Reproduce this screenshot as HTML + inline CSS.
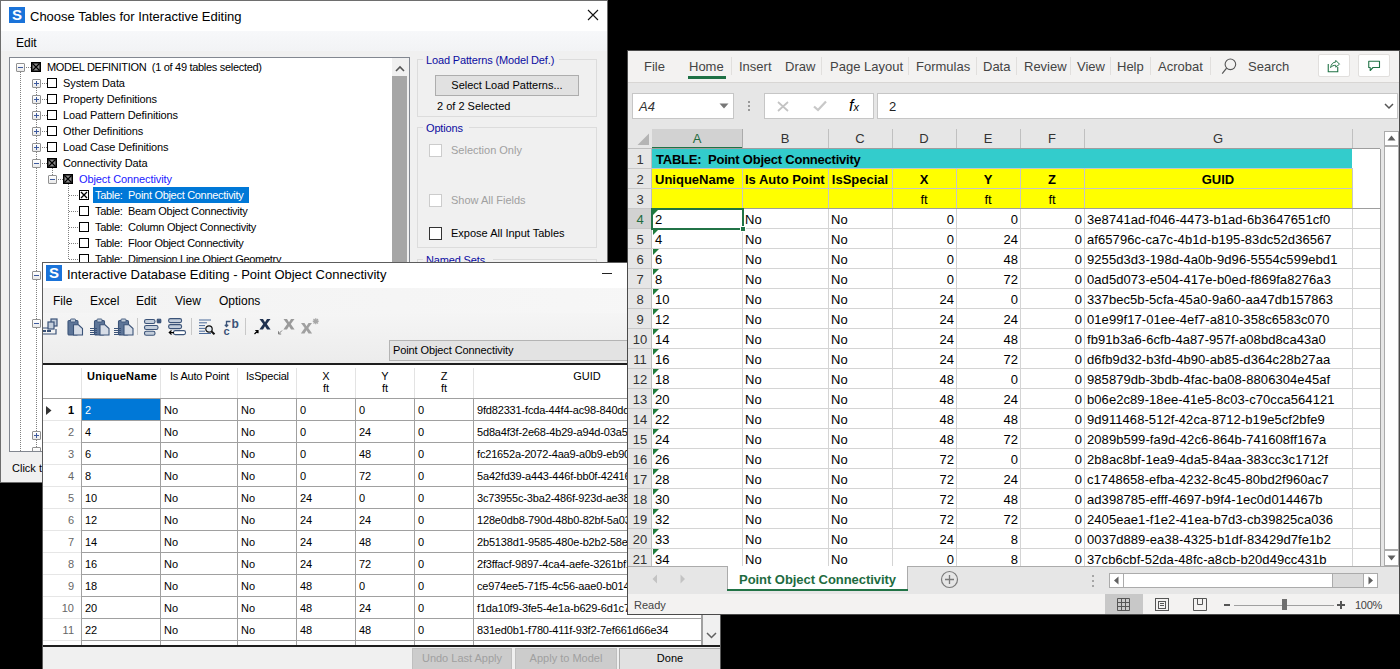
<!DOCTYPE html><html><head><meta charset="utf-8"><style>
*{margin:0;padding:0;box-sizing:border-box}
html,body{width:1400px;height:669px;overflow:hidden;background:#000;font-family:"Liberation Sans",sans-serif}
.ab{position:absolute}
.t{position:absolute;white-space:pre;line-height:1}
</style></head><body>
<div class="ab" style="left:0;top:0;width:1400px;height:669px;background:#000;overflow:hidden">

<div class="ab" id="d1" style="left:0;top:0;width:608px;height:483px;background:#f0f0f0;overflow:hidden">
<div class="ab" style="left:0;top:0;width:608px;height:31px;background:#fff"></div>
<div class="ab" style="left:9px;top:7px;width:16px;height:16px;background:#1a73d9"></div>
<div class="t" style="left:9px;top:7px;width:16px;font-size:15px;font-weight:700;color:#fff;text-align:center">S</div>
<div class="t" style="left:30px;top:10px;font-size:13px;color:#000">Choose Tables for Interactive Editing</div>
<svg class="ab" style="left:587px;top:9px" width="12" height="12"><path d="M1 1L11 11M11 1L1 11" stroke="#111" stroke-width="1.1"/></svg>
<div class="ab" style="left:0;top:31px;width:608px;height:20px;background:linear-gradient(#f7f8fa,#f2f3f5)"></div>
<div class="t" style="left:16px;top:37px;font-size:12px;color:#000">Edit</div>
<div class="ab" style="left:9px;top:57px;width:401px;height:395px;background:#fff;border:1px solid #828790"></div>
<div class="ab" style="left:392px;top:58px;width:17px;height:393px;background:#f0f0f0"></div>
<svg class="ab" style="left:395px;top:65px" width="10" height="7"><path d="M1 6L5 2L9 6" stroke="#555" stroke-width="1.6" fill="none"/></svg>
<div class="ab" style="left:392px;top:76px;width:15px;height:376px;background:#a6a6a6"></div>
<div class="ab" style="left:20px;top:72px;width:1px;height:380px;background:repeating-linear-gradient(#808080 0 1px,transparent 1px 2px)"></div>
<div class="ab" style="left:36px;top:88px;width:1px;height:364px;background:repeating-linear-gradient(#808080 0 1px,transparent 1px 2px)"></div>
<div class="ab" style="left:52px;top:168px;width:1px;height:12px;background:repeating-linear-gradient(#808080 0 1px,transparent 1px 2px)"></div>
<div class="ab" style="left:68px;top:184px;width:1px;height:76px;background:repeating-linear-gradient(#808080 0 1px,transparent 1px 2px)"></div>
<div class="ab" style="left:16px;top:63px;width:9px;height:9px;border:1px solid #919191;border-radius:1px;background:linear-gradient(#fff,#e9e9e9)"></div>
<div class="ab" style="left:18px;top:67px;width:5px;height:1px;background:#3d5a9e"></div>
<div class="ab" style="left:26px;top:67px;width:5px;height:1px;background:repeating-linear-gradient(90deg,#808080 0 1px,transparent 1px 2px)"></div>
<svg class="ab" style="left:31px;top:62px" width="10" height="10"><rect x="0" y="0" width="10" height="10" fill="#000"/><path d="M1.5 1.5H8.5L5 5ZM1.5 8.5H8.5L5 5ZM1.5 1.5V8.5L5 5ZM8.5 1.5V8.5L5 5Z" fill="#8c8c8c"/><path d="M1.5 1.5L8.5 8.5M8.5 1.5L1.5 8.5" stroke="#000" stroke-width="1.2"/></svg>
<div class="t" style="left:47px;top:62px;font-size:11px;letter-spacing:-0.1px;color:#000;letter-spacing:-0.3px">MODEL DEFINITION  (1 of 49 tables selected)</div>
<div class="ab" style="left:32px;top:79px;width:9px;height:9px;border:1px solid #919191;border-radius:1px;background:linear-gradient(#fff,#e9e9e9)"></div>
<div class="ab" style="left:34px;top:83px;width:5px;height:1px;background:#3d5a9e"></div>
<div class="ab" style="left:36px;top:81px;width:1px;height:5px;background:#3d5a9e"></div>
<div class="ab" style="left:42px;top:83px;width:5px;height:1px;background:repeating-linear-gradient(90deg,#808080 0 1px,transparent 1px 2px)"></div>
<div class="ab" style="left:47px;top:78px;width:10px;height:10px;border:1px solid #000;background:#fff"></div>
<div class="t" style="left:63px;top:78px;font-size:11px;letter-spacing:-0.1px;color:#000">System Data</div>
<div class="ab" style="left:32px;top:95px;width:9px;height:9px;border:1px solid #919191;border-radius:1px;background:linear-gradient(#fff,#e9e9e9)"></div>
<div class="ab" style="left:34px;top:99px;width:5px;height:1px;background:#3d5a9e"></div>
<div class="ab" style="left:36px;top:97px;width:1px;height:5px;background:#3d5a9e"></div>
<div class="ab" style="left:42px;top:99px;width:5px;height:1px;background:repeating-linear-gradient(90deg,#808080 0 1px,transparent 1px 2px)"></div>
<div class="ab" style="left:47px;top:94px;width:10px;height:10px;border:1px solid #000;background:#fff"></div>
<div class="t" style="left:63px;top:94px;font-size:11px;letter-spacing:-0.1px;color:#000">Property Definitions</div>
<div class="ab" style="left:32px;top:111px;width:9px;height:9px;border:1px solid #919191;border-radius:1px;background:linear-gradient(#fff,#e9e9e9)"></div>
<div class="ab" style="left:34px;top:115px;width:5px;height:1px;background:#3d5a9e"></div>
<div class="ab" style="left:36px;top:113px;width:1px;height:5px;background:#3d5a9e"></div>
<div class="ab" style="left:42px;top:115px;width:5px;height:1px;background:repeating-linear-gradient(90deg,#808080 0 1px,transparent 1px 2px)"></div>
<div class="ab" style="left:47px;top:110px;width:10px;height:10px;border:1px solid #000;background:#fff"></div>
<div class="t" style="left:63px;top:110px;font-size:11px;letter-spacing:-0.1px;color:#000">Load Pattern Definitions</div>
<div class="ab" style="left:32px;top:127px;width:9px;height:9px;border:1px solid #919191;border-radius:1px;background:linear-gradient(#fff,#e9e9e9)"></div>
<div class="ab" style="left:34px;top:131px;width:5px;height:1px;background:#3d5a9e"></div>
<div class="ab" style="left:36px;top:129px;width:1px;height:5px;background:#3d5a9e"></div>
<div class="ab" style="left:42px;top:131px;width:5px;height:1px;background:repeating-linear-gradient(90deg,#808080 0 1px,transparent 1px 2px)"></div>
<div class="ab" style="left:47px;top:126px;width:10px;height:10px;border:1px solid #000;background:#fff"></div>
<div class="t" style="left:63px;top:126px;font-size:11px;letter-spacing:-0.1px;color:#000">Other Definitions</div>
<div class="ab" style="left:32px;top:143px;width:9px;height:9px;border:1px solid #919191;border-radius:1px;background:linear-gradient(#fff,#e9e9e9)"></div>
<div class="ab" style="left:34px;top:147px;width:5px;height:1px;background:#3d5a9e"></div>
<div class="ab" style="left:36px;top:145px;width:1px;height:5px;background:#3d5a9e"></div>
<div class="ab" style="left:42px;top:147px;width:5px;height:1px;background:repeating-linear-gradient(90deg,#808080 0 1px,transparent 1px 2px)"></div>
<div class="ab" style="left:47px;top:142px;width:10px;height:10px;border:1px solid #000;background:#fff"></div>
<div class="t" style="left:63px;top:142px;font-size:11px;letter-spacing:-0.1px;color:#000">Load Case Definitions</div>
<div class="ab" style="left:32px;top:159px;width:9px;height:9px;border:1px solid #919191;border-radius:1px;background:linear-gradient(#fff,#e9e9e9)"></div>
<div class="ab" style="left:34px;top:163px;width:5px;height:1px;background:#3d5a9e"></div>
<div class="ab" style="left:42px;top:163px;width:5px;height:1px;background:repeating-linear-gradient(90deg,#808080 0 1px,transparent 1px 2px)"></div>
<svg class="ab" style="left:47px;top:158px" width="10" height="10"><rect x="0" y="0" width="10" height="10" fill="#000"/><path d="M1.5 1.5H8.5L5 5ZM1.5 8.5H8.5L5 5ZM1.5 1.5V8.5L5 5ZM8.5 1.5V8.5L5 5Z" fill="#8c8c8c"/><path d="M1.5 1.5L8.5 8.5M8.5 1.5L1.5 8.5" stroke="#000" stroke-width="1.2"/></svg>
<div class="t" style="left:63px;top:158px;font-size:11px;letter-spacing:-0.1px;color:#000">Connectivity Data</div>
<div class="ab" style="left:48px;top:175px;width:9px;height:9px;border:1px solid #919191;border-radius:1px;background:linear-gradient(#fff,#e9e9e9)"></div>
<div class="ab" style="left:50px;top:179px;width:5px;height:1px;background:#3d5a9e"></div>
<div class="ab" style="left:58px;top:179px;width:5px;height:1px;background:repeating-linear-gradient(90deg,#808080 0 1px,transparent 1px 2px)"></div>
<svg class="ab" style="left:63px;top:174px" width="10" height="10"><rect x="0" y="0" width="10" height="10" fill="#000"/><path d="M1.5 1.5H8.5L5 5ZM1.5 8.5H8.5L5 5ZM1.5 1.5V8.5L5 5ZM8.5 1.5V8.5L5 5Z" fill="#8c8c8c"/><path d="M1.5 1.5L8.5 8.5M8.5 1.5L1.5 8.5" stroke="#000" stroke-width="1.2"/></svg>
<div class="t" style="left:79px;top:174px;font-size:11px;letter-spacing:-0.1px;color:#2020ff">Object Connectivity</div>
<div class="ab" style="left:69px;top:195px;width:9px;height:1px;background:repeating-linear-gradient(90deg,#808080 0 1px,transparent 1px 2px)"></div>
<svg class="ab" style="left:79px;top:190px" width="10" height="10"><rect x="0.5" y="0.5" width="9" height="9" fill="#fff" stroke="#000"/><path d="M2 2L8 8M8 2L2 8" stroke="#000" stroke-width="1.3"/></svg>
<div class="ab" style="left:93px;top:187px;width:156px;height:16px;background:#0078d7"></div>
<div class="t" style="left:95px;top:190px;font-size:11px;letter-spacing:-0.3px;color:#fff">Table:  Point Object Connectivity</div>
<div class="ab" style="left:69px;top:211px;width:9px;height:1px;background:repeating-linear-gradient(90deg,#808080 0 1px,transparent 1px 2px)"></div>
<div class="ab" style="left:79px;top:206px;width:10px;height:10px;border:1px solid #000;background:#fff"></div>
<div class="t" style="left:95px;top:206px;font-size:11px;letter-spacing:-0.3px;color:#000">Table:  Beam Object Connectivity</div>
<div class="ab" style="left:69px;top:227px;width:9px;height:1px;background:repeating-linear-gradient(90deg,#808080 0 1px,transparent 1px 2px)"></div>
<div class="ab" style="left:79px;top:222px;width:10px;height:10px;border:1px solid #000;background:#fff"></div>
<div class="t" style="left:95px;top:222px;font-size:11px;letter-spacing:-0.3px;color:#000">Table:  Column Object Connectivity</div>
<div class="ab" style="left:69px;top:243px;width:9px;height:1px;background:repeating-linear-gradient(90deg,#808080 0 1px,transparent 1px 2px)"></div>
<div class="ab" style="left:79px;top:238px;width:10px;height:10px;border:1px solid #000;background:#fff"></div>
<div class="t" style="left:95px;top:238px;font-size:11px;letter-spacing:-0.3px;color:#000">Table:  Floor Object Connectivity</div>
<div class="ab" style="left:69px;top:259px;width:9px;height:1px;background:repeating-linear-gradient(90deg,#808080 0 1px,transparent 1px 2px)"></div>
<div class="ab" style="left:79px;top:254px;width:10px;height:10px;border:1px solid #000;background:#fff"></div>
<div class="t" style="left:95px;top:254px;font-size:11px;letter-spacing:-0.3px;color:#000">Table:  Dimension Line Object Geometry</div>
<div class="ab" style="left:32px;top:271px;width:9px;height:9px;border:1px solid #919191;border-radius:1px;background:linear-gradient(#fff,#e9e9e9)"></div>
<div class="ab" style="left:34px;top:275px;width:5px;height:1px;background:#3d5a9e"></div>
<div class="ab" style="left:42px;top:275px;width:5px;height:1px;background:repeating-linear-gradient(90deg,#808080 0 1px,transparent 1px 2px)"></div>
<div class="ab" style="left:32px;top:319px;width:9px;height:9px;border:1px solid #919191;border-radius:1px;background:linear-gradient(#fff,#e9e9e9)"></div>
<div class="ab" style="left:34px;top:323px;width:5px;height:1px;background:#3d5a9e"></div>
<div class="ab" style="left:42px;top:323px;width:5px;height:1px;background:repeating-linear-gradient(90deg,#808080 0 1px,transparent 1px 2px)"></div>
<div class="ab" style="left:32px;top:431px;width:9px;height:9px;border:1px solid #919191;border-radius:1px;background:linear-gradient(#fff,#e9e9e9)"></div>
<div class="ab" style="left:34px;top:435px;width:5px;height:1px;background:#3d5a9e"></div>
<div class="ab" style="left:36px;top:433px;width:1px;height:5px;background:#3d5a9e"></div>
<div class="ab" style="left:42px;top:435px;width:5px;height:1px;background:repeating-linear-gradient(90deg,#808080 0 1px,transparent 1px 2px)"></div>
<div class="ab" style="left:32px;top:447px;width:9px;height:9px;border:1px solid #919191;border-radius:1px;background:linear-gradient(#fff,#e9e9e9)"></div>
<div class="ab" style="left:34px;top:451px;width:5px;height:1px;background:#3d5a9e"></div>
<div class="ab" style="left:9px;top:451px;width:401px;height:1px;background:#828790"></div>
<div class="ab" style="left:9px;top:452px;width:401px;height:8px;background:#f0f0f0"></div>
<div class="ab" style="left:417px;top:59px;width:180px;height:58px;border:1px solid #dcdcdc"></div>
<div class="ab" style="left:423px;top:53px;width:136px;height:12px;background:#f0f0f0"></div>
<div class="t" style="left:426px;top:55px;font-size:11px;color:#0c0ca0;letter-spacing:-0.15px">Load Patterns (Model Def.)</div>
<div class="ab" style="left:417px;top:127px;width:180px;height:121px;border:1px solid #dcdcdc"></div>
<div class="ab" style="left:423px;top:121px;width:46px;height:12px;background:#f0f0f0"></div>
<div class="t" style="left:426px;top:123px;font-size:11px;color:#0c0ca0;letter-spacing:-0.15px">Options</div>
<div class="ab" style="left:417px;top:259px;width:180px;height:60px;border:1px solid #dcdcdc"></div>
<div class="ab" style="left:423px;top:253px;width:70px;height:12px;background:#f0f0f0"></div>
<div class="t" style="left:426px;top:255px;font-size:11px;color:#0c0ca0;letter-spacing:-0.15px">Named Sets</div>
<div class="ab" style="left:435px;top:75px;width:144px;height:21px;background:#e1e1e1;border:1px solid #adadad"></div>
<div class="t" style="left:435px;top:80px;width:144px;text-align:center;font-size:11px;color:#000">Select Load Patterns...</div>
<div class="t" style="left:437px;top:101px;font-size:11px;color:#000">2 of 2 Selected</div>
<div class="ab" style="left:429px;top:144px;width:13px;height:13px;border:1px solid #cccccc;background:#fff"></div>
<div class="t" style="left:451px;top:145px;font-size:11px;color:#a0a0a0">Selection Only</div>
<div class="ab" style="left:429px;top:194px;width:13px;height:13px;border:1px solid #cccccc;background:#fff"></div>
<div class="t" style="left:451px;top:195px;font-size:11px;color:#a0a0a0">Show All Fields</div>
<div class="ab" style="left:429px;top:227px;width:13px;height:13px;border:1px solid #333;background:#fff"></div>
<div class="t" style="left:451px;top:228px;font-size:11px;color:#000">Expose All Input Tables</div>
<div class="t" style="left:12px;top:463px;font-size:11px;color:#000">Click the</div>
<div class="ab" style="left:0;top:0;width:608px;height:483px;border:1px solid #6e6e6e"></div>
</div>
<div class="ab" id="ide" style="left:42px;top:262px;width:679px;height:420px;background:#f0f0f0;border:1px solid #5c5c5c;overflow:hidden">
<div class="ab" style="left:0;top:0;width:700px;height:25px;background:#fff"></div>
<div class="ab" style="left:3px;top:2px;width:16px;height:16px;background:#1a73d9"></div>
<div class="t" style="left:3px;top:2px;width:16px;font-size:15px;font-weight:700;color:#fff;text-align:center">S</div>
<div class="t" style="left:24px;top:5px;font-size:13px;color:#000">Interactive Database Editing - Point Object Connectivity</div>
<div class="ab" style="left:559px;top:10px;width:10px;height:1px;background:#222"></div>
<div class="ab" style="left:0;top:25px;width:700px;height:25px;background:linear-gradient(90deg,#f3f3f3,#f7f7f7)"></div>
<div class="t" style="left:10px;top:32px;font-size:12px;color:#000">File</div>
<div class="t" style="left:47px;top:32px;font-size:12px;color:#000">Excel</div>
<div class="t" style="left:93px;top:32px;font-size:12px;color:#000">Edit</div>
<div class="t" style="left:132px;top:32px;font-size:12px;color:#000">View</div>
<div class="t" style="left:176px;top:32px;font-size:12px;color:#000">Options</div>
<div class="ab" style="left:0;top:50px;width:700px;height:50px;background:linear-gradient(#f5f5f5,#ececec)"></div>
<svg class="ab" style="left:0px;top:55px" width="18" height="18" viewBox="0 0 18 18"><rect x="8" y="1" width="6" height="7" fill="#c4cedb" stroke="#3b5378" stroke-width="1.2"/><rect x="5" y="4" width="6" height="7" fill="#c4cedb" stroke="#3b5378" stroke-width="1.2"/><path d="M0 10H5M0 16H13V11" stroke="#3b5378" fill="none" stroke-width="1.2"/><rect x="0" y="12" width="3" height="2" fill="#3b5378"/><rect x="4" y="12" width="4" height="2" fill="#3b5378"/></svg>
<svg class="ab" style="left:24px;top:55px" width="20" height="18" viewBox="0 0 20 18"><rect x="1" y="2.5" width="10" height="14.5" rx="1.2" fill="#5d7598" stroke="#3b5378" stroke-width="1.1"/><rect x="3.5" y="1" width="5" height="3" rx="0.8" fill="#c4cedb" stroke="#3b5378" stroke-width="0.9"/><path d="M6.5 6.8H11.5L15.5 10.5V17H6.5Z" fill="#d7dde7" stroke="#3b5378" stroke-width="1.1"/></svg>
<svg class="ab" style="left:47px;top:55px" width="20" height="18" viewBox="0 0 20 18"><g transform="translate(3.5,0)"><rect x="1" y="2.5" width="10" height="14.5" rx="1.2" fill="#5d7598" stroke="#3b5378" stroke-width="1.1"/><rect x="3.5" y="1" width="5" height="3" rx="0.8" fill="#c4cedb" stroke="#3b5378" stroke-width="0.9"/><path d="M6.5 6.8H11.5L15.5 10.5V17H6.5Z" fill="#d7dde7" stroke="#3b5378" stroke-width="1.1"/></g><rect x="0" y="10" width="7" height="1" fill="#3b5378"/><rect x="0" y="12" width="7" height="1" fill="#3b5378"/><rect x="0" y="14" width="7" height="1" fill="#3b5378"/><rect x="0" y="16" width="7" height="1" fill="#3b5378"/></svg>
<svg class="ab" style="left:71px;top:55px" width="20" height="18" viewBox="0 0 20 18"><g transform="translate(3.5,0)"><rect x="1" y="2.5" width="10" height="14.5" rx="1.2" fill="#5d7598" stroke="#3b5378" stroke-width="1.1"/><rect x="3.5" y="1" width="5" height="3" rx="0.8" fill="#c4cedb" stroke="#3b5378" stroke-width="0.9"/><path d="M6.5 6.8H11.5L15.5 10.5V17H6.5Z" fill="#d7dde7" stroke="#3b5378" stroke-width="1.1"/></g><rect x="0" y="10" width="7" height="1" fill="#3b5378"/><rect x="0" y="12" width="7" height="1" fill="#3b5378"/><rect x="0" y="14" width="7" height="1" fill="#3b5378"/><rect x="0" y="16" width="7" height="1" fill="#3b5378"/></svg>
<div class="ab" style="left:94px;top:55px;width:1px;height:17px;background:#c8c8c8"></div>
<svg class="ab" style="left:100px;top:55px" width="19" height="18" viewBox="0 0 19 18"><rect x="1.5" y="1.5" width="10.5" height="4" rx="1.8" fill="#c4cedb" stroke="#3b5378" stroke-width="1.1"/><rect x="1.5" y="7.5" width="13.5" height="4" rx="1.8" fill="#c4cedb" stroke="#3b5378" stroke-width="1.1"/><rect x="1.5" y="13.2" width="10.5" height="4" rx="1.8" fill="#c4cedb" stroke="#3b5378" stroke-width="1.1"/><path d="M14 1L18 5M18 1L14 5M16 0.5V5.5M13.5 3H18.5" stroke="#3b5378" stroke-width="1.3"/></svg>
<svg class="ab" style="left:125px;top:55px" width="19" height="18" viewBox="0 0 19 18"><rect x="0.6" y="0.6" width="13" height="4" rx="1.8" fill="#c4cedb" stroke="#3b5378" stroke-width="1.1"/><rect x="0.6" y="6.6" width="13" height="4" rx="1.8" fill="#c4cedb" stroke="#3b5378" stroke-width="1.1"/><rect x="5.5" y="12.6" width="12" height="4" rx="1.8" fill="#fff" stroke="#3b5378" stroke-width="1.1"/><path d="M1 14.6H6M3.5 12.5L1.2 14.6L3.5 16.7" stroke="#000" fill="none" stroke-width="1.1"/></svg>
<div class="ab" style="left:148px;top:55px;width:1px;height:17px;background:#c8c8c8"></div>
<svg class="ab" style="left:156px;top:56px" width="17" height="16" viewBox="0 0 17 16"><path d="M0 1H12M0 3.8H8M0 6.6H6M0 9.4H6M0 12.2H6M0 14.5H12" stroke="#4a6a9a" stroke-width="1"/><circle cx="10" cy="10" r="3.2" fill="#e8eef5" stroke="#111" stroke-width="1.2"/><path d="M12.3 12.3L15.5 15.3" stroke="#111" stroke-width="2"/></svg>
<svg class="ab" style="left:180px;top:55px" width="17" height="17" viewBox="0 0 17 17"><text x="8.5" y="9.5" font-family="Liberation Sans" font-weight="700" font-size="12" fill="#3b5378">b</text><text x="0.5" y="17" font-family="Liberation Sans" font-weight="700" font-size="11" fill="#3b5378">c</text><path d="M7.5 3.5H3.5V8.5M1.8 6.8L3.5 8.5L5.2 6.8" stroke="#3b5378" fill="none" stroke-width="1.3"/></svg>
<div class="ab" style="left:202px;top:55px;width:1px;height:17px;background:#c8c8c8"></div>
<svg class="ab" style="left:210px;top:55px" width="18" height="17" viewBox="0 0 18 17"><path d="M6.5 1H10L12 4.3L14 1H17.5L13.8 6L17.6 11.5H14L12 8.2L10 11.5H6.4L10.2 6Z" fill="#1f3150"/><path d="M1.5 16L5 12.5M2.3 12.5H5V15.2" stroke="#000" fill="none" stroke-width="1.2"/></svg>
<svg class="ab" style="left:234px;top:55px" width="18" height="17" viewBox="0 0 18 17"><path d="M6.5 1H10L12 4.3L14 1H17.5L13.8 6L17.6 11.5H14L12 8.2L10 11.5H6.4L10.2 6Z" fill="#9a9a9a"/><path d="M5 12.5L1.5 16M1.5 13.3V16H4.2" stroke="#808080" fill="none" stroke-width="1"/></svg>
<svg class="ab" style="left:258px;top:55px" width="18" height="17" viewBox="0 0 18 17"><path d="M0 5H3.5L5.5 8.3L7.5 5H11L7.3 10L11.1 15.5H7.5L5.5 12.2L3.5 15.5H-0.1L3.7 10Z" fill="#a0a0a0"/><path d="M12.5 1L17 5.5M17 1L12.5 5.5M14.75 0.3V6.2M11.8 3.25H17.7" stroke="#a8a8a8" stroke-width="1.3"/></svg>
<div class="ab" style="left:346px;top:77px;width:320px;height:21px;background:#e3e3e3;border:1px solid #b4b4b4"></div>
<div class="t" style="left:350px;top:82px;font-size:11px;color:#000;letter-spacing:-0.1px">Point Object Connectivity</div>
<div class="ab" style="left:0;top:100px;width:700px;height:2px;background:#1e1e1e"></div>
<div class="ab" style="left:0;top:102px;width:700px;height:280px;background:#fff"></div>
<div class="ab" style="left:38px;top:105px;width:1px;height:30px;background:#e3e3e3"></div>
<div class="ab" style="left:117px;top:105px;width:1px;height:30px;background:#e3e3e3"></div>
<div class="ab" style="left:194px;top:105px;width:1px;height:30px;background:#e3e3e3"></div>
<div class="ab" style="left:253px;top:105px;width:1px;height:30px;background:#e3e3e3"></div>
<div class="ab" style="left:312px;top:105px;width:1px;height:30px;background:#e3e3e3"></div>
<div class="ab" style="left:371px;top:105px;width:1px;height:30px;background:#e3e3e3"></div>
<div class="ab" style="left:430px;top:105px;width:1px;height:30px;background:#e3e3e3"></div>
<div class="ab" style="left:38px;top:135px;width:1px;height:247px;background:#a0a0a0"></div>
<div class="ab" style="left:0px;top:135px;width:658px;height:1px;background:#a0a0a0"></div>
<div class="t" style="left:44px;top:108px;font-size:11px;color:#000;font-weight:700;letter-spacing:0.3px">UniqueName</div>
<div class="t" style="left:127px;top:108px;font-size:11px;color:#000;letter-spacing:-0.2px">Is Auto Point</div>
<div class="t" style="left:203px;top:108px;font-size:11px;color:#000;letter-spacing:-0.2px">IsSpecial</div>
<div class="t" style="left:263px;top:108px;width:40px;text-align:center;font-size:11px;color:#000">X</div>
<div class="t" style="left:263px;top:120px;width:40px;text-align:center;font-size:11px;color:#000">ft</div>
<div class="t" style="left:322px;top:108px;width:40px;text-align:center;font-size:11px;color:#000">Y</div>
<div class="t" style="left:322px;top:120px;width:40px;text-align:center;font-size:11px;color:#000">ft</div>
<div class="t" style="left:381px;top:108px;width:40px;text-align:center;font-size:11px;color:#000">Z</div>
<div class="t" style="left:381px;top:120px;width:40px;text-align:center;font-size:11px;color:#000">ft</div>
<div class="t" style="left:514px;top:108px;width:60px;text-align:center;font-size:11px;color:#000">GUID</div>
<div class="ab" style="left:0px;top:157px;width:38px;height:1px;background:#e6e6e6"></div>
<div class="ab" style="left:38px;top:157px;width:620px;height:1px;background:#a0a0a0"></div>
<div class="ab" style="left:117px;top:135px;width:1px;height:22px;background:#a0a0a0"></div>
<div class="ab" style="left:194px;top:135px;width:1px;height:22px;background:#a0a0a0"></div>
<div class="ab" style="left:253px;top:135px;width:1px;height:22px;background:#a0a0a0"></div>
<div class="ab" style="left:312px;top:135px;width:1px;height:22px;background:#a0a0a0"></div>
<div class="ab" style="left:371px;top:135px;width:1px;height:22px;background:#a0a0a0"></div>
<div class="ab" style="left:430px;top:135px;width:1px;height:22px;background:#a0a0a0"></div>
<div class="ab" style="left:39px;top:136px;width:78px;height:21px;background:#0078d7"></div>
<svg class="ab" style="left:3px;top:143px" width="6" height="9" viewBox="0 0 6 9"><path d="M0 0L5.5 4.5L0 9Z" fill="#333"/></svg>
<div class="t" style="left:0px;top:142px;width:31px;text-align:right;font-size:11px;font-weight:700;color:#000">1</div>
<div class="t" style="left:42px;top:142px;font-size:11px;color:#fff;">2</div>
<div class="t" style="left:121px;top:142px;font-size:11px;color:#000;">No</div>
<div class="t" style="left:198px;top:142px;font-size:11px;color:#000;">No</div>
<div class="t" style="left:257px;top:142px;font-size:11px;color:#000;">0</div>
<div class="t" style="left:316px;top:142px;font-size:11px;color:#000;">0</div>
<div class="t" style="left:375px;top:142px;font-size:11px;color:#000;">0</div>
<div class="t" style="left:434px;top:142px;font-size:11px;color:#000;letter-spacing:-0.17px">9fd82331-fcda-44f4-ac98-840dd12345</div>
<div class="ab" style="left:0px;top:179px;width:38px;height:1px;background:#e6e6e6"></div>
<div class="ab" style="left:38px;top:179px;width:620px;height:1px;background:#a0a0a0"></div>
<div class="ab" style="left:117px;top:157px;width:1px;height:22px;background:#a0a0a0"></div>
<div class="ab" style="left:194px;top:157px;width:1px;height:22px;background:#a0a0a0"></div>
<div class="ab" style="left:253px;top:157px;width:1px;height:22px;background:#a0a0a0"></div>
<div class="ab" style="left:312px;top:157px;width:1px;height:22px;background:#a0a0a0"></div>
<div class="ab" style="left:371px;top:157px;width:1px;height:22px;background:#a0a0a0"></div>
<div class="ab" style="left:430px;top:157px;width:1px;height:22px;background:#a0a0a0"></div>
<div class="t" style="left:0px;top:164px;width:31px;text-align:right;font-size:11px;color:#666">2</div>
<div class="t" style="left:42px;top:164px;font-size:11px;color:#000;">4</div>
<div class="t" style="left:121px;top:164px;font-size:11px;color:#000;">No</div>
<div class="t" style="left:198px;top:164px;font-size:11px;color:#000;">No</div>
<div class="t" style="left:257px;top:164px;font-size:11px;color:#000;">0</div>
<div class="t" style="left:316px;top:164px;font-size:11px;color:#000;">24</div>
<div class="t" style="left:375px;top:164px;font-size:11px;color:#000;">0</div>
<div class="t" style="left:434px;top:164px;font-size:11px;color:#000;letter-spacing:-0.17px">5d8a4f3f-2e68-4b29-a94d-03a5123456</div>
<div class="ab" style="left:0px;top:201px;width:38px;height:1px;background:#e6e6e6"></div>
<div class="ab" style="left:38px;top:201px;width:620px;height:1px;background:#a0a0a0"></div>
<div class="ab" style="left:117px;top:179px;width:1px;height:22px;background:#a0a0a0"></div>
<div class="ab" style="left:194px;top:179px;width:1px;height:22px;background:#a0a0a0"></div>
<div class="ab" style="left:253px;top:179px;width:1px;height:22px;background:#a0a0a0"></div>
<div class="ab" style="left:312px;top:179px;width:1px;height:22px;background:#a0a0a0"></div>
<div class="ab" style="left:371px;top:179px;width:1px;height:22px;background:#a0a0a0"></div>
<div class="ab" style="left:430px;top:179px;width:1px;height:22px;background:#a0a0a0"></div>
<div class="t" style="left:0px;top:186px;width:31px;text-align:right;font-size:11px;color:#666">3</div>
<div class="t" style="left:42px;top:186px;font-size:11px;color:#000;">6</div>
<div class="t" style="left:121px;top:186px;font-size:11px;color:#000;">No</div>
<div class="t" style="left:198px;top:186px;font-size:11px;color:#000;">No</div>
<div class="t" style="left:257px;top:186px;font-size:11px;color:#000;">0</div>
<div class="t" style="left:316px;top:186px;font-size:11px;color:#000;">48</div>
<div class="t" style="left:375px;top:186px;font-size:11px;color:#000;">0</div>
<div class="t" style="left:434px;top:186px;font-size:11px;color:#000;letter-spacing:-0.17px">fc21652a-2072-4aa9-a0b9-eb90123456</div>
<div class="ab" style="left:0px;top:223px;width:38px;height:1px;background:#e6e6e6"></div>
<div class="ab" style="left:38px;top:223px;width:620px;height:1px;background:#a0a0a0"></div>
<div class="ab" style="left:117px;top:201px;width:1px;height:22px;background:#a0a0a0"></div>
<div class="ab" style="left:194px;top:201px;width:1px;height:22px;background:#a0a0a0"></div>
<div class="ab" style="left:253px;top:201px;width:1px;height:22px;background:#a0a0a0"></div>
<div class="ab" style="left:312px;top:201px;width:1px;height:22px;background:#a0a0a0"></div>
<div class="ab" style="left:371px;top:201px;width:1px;height:22px;background:#a0a0a0"></div>
<div class="ab" style="left:430px;top:201px;width:1px;height:22px;background:#a0a0a0"></div>
<div class="t" style="left:0px;top:208px;width:31px;text-align:right;font-size:11px;color:#666">4</div>
<div class="t" style="left:42px;top:208px;font-size:11px;color:#000;">8</div>
<div class="t" style="left:121px;top:208px;font-size:11px;color:#000;">No</div>
<div class="t" style="left:198px;top:208px;font-size:11px;color:#000;">No</div>
<div class="t" style="left:257px;top:208px;font-size:11px;color:#000;">0</div>
<div class="t" style="left:316px;top:208px;font-size:11px;color:#000;">72</div>
<div class="t" style="left:375px;top:208px;font-size:11px;color:#000;">0</div>
<div class="t" style="left:434px;top:208px;font-size:11px;color:#000;letter-spacing:-0.17px">5a42fd39-a443-446f-bb0f-4241612345</div>
<div class="ab" style="left:0px;top:245px;width:38px;height:1px;background:#e6e6e6"></div>
<div class="ab" style="left:38px;top:245px;width:620px;height:1px;background:#a0a0a0"></div>
<div class="ab" style="left:117px;top:223px;width:1px;height:22px;background:#a0a0a0"></div>
<div class="ab" style="left:194px;top:223px;width:1px;height:22px;background:#a0a0a0"></div>
<div class="ab" style="left:253px;top:223px;width:1px;height:22px;background:#a0a0a0"></div>
<div class="ab" style="left:312px;top:223px;width:1px;height:22px;background:#a0a0a0"></div>
<div class="ab" style="left:371px;top:223px;width:1px;height:22px;background:#a0a0a0"></div>
<div class="ab" style="left:430px;top:223px;width:1px;height:22px;background:#a0a0a0"></div>
<div class="t" style="left:0px;top:230px;width:31px;text-align:right;font-size:11px;color:#666">5</div>
<div class="t" style="left:42px;top:230px;font-size:11px;color:#000;">10</div>
<div class="t" style="left:121px;top:230px;font-size:11px;color:#000;">No</div>
<div class="t" style="left:198px;top:230px;font-size:11px;color:#000;">No</div>
<div class="t" style="left:257px;top:230px;font-size:11px;color:#000;">24</div>
<div class="t" style="left:316px;top:230px;font-size:11px;color:#000;">0</div>
<div class="t" style="left:375px;top:230px;font-size:11px;color:#000;">0</div>
<div class="t" style="left:434px;top:230px;font-size:11px;color:#000;letter-spacing:-0.17px">3c73955c-3ba2-486f-923d-ae38123456</div>
<div class="ab" style="left:0px;top:267px;width:38px;height:1px;background:#e6e6e6"></div>
<div class="ab" style="left:38px;top:267px;width:620px;height:1px;background:#a0a0a0"></div>
<div class="ab" style="left:117px;top:245px;width:1px;height:22px;background:#a0a0a0"></div>
<div class="ab" style="left:194px;top:245px;width:1px;height:22px;background:#a0a0a0"></div>
<div class="ab" style="left:253px;top:245px;width:1px;height:22px;background:#a0a0a0"></div>
<div class="ab" style="left:312px;top:245px;width:1px;height:22px;background:#a0a0a0"></div>
<div class="ab" style="left:371px;top:245px;width:1px;height:22px;background:#a0a0a0"></div>
<div class="ab" style="left:430px;top:245px;width:1px;height:22px;background:#a0a0a0"></div>
<div class="t" style="left:0px;top:252px;width:31px;text-align:right;font-size:11px;color:#666">6</div>
<div class="t" style="left:42px;top:252px;font-size:11px;color:#000;">12</div>
<div class="t" style="left:121px;top:252px;font-size:11px;color:#000;">No</div>
<div class="t" style="left:198px;top:252px;font-size:11px;color:#000;">No</div>
<div class="t" style="left:257px;top:252px;font-size:11px;color:#000;">24</div>
<div class="t" style="left:316px;top:252px;font-size:11px;color:#000;">24</div>
<div class="t" style="left:375px;top:252px;font-size:11px;color:#000;">0</div>
<div class="t" style="left:434px;top:252px;font-size:11px;color:#000;letter-spacing:-0.17px">128e0db8-790d-48b0-82bf-5a03123456</div>
<div class="ab" style="left:0px;top:289px;width:38px;height:1px;background:#e6e6e6"></div>
<div class="ab" style="left:38px;top:289px;width:620px;height:1px;background:#a0a0a0"></div>
<div class="ab" style="left:117px;top:267px;width:1px;height:22px;background:#a0a0a0"></div>
<div class="ab" style="left:194px;top:267px;width:1px;height:22px;background:#a0a0a0"></div>
<div class="ab" style="left:253px;top:267px;width:1px;height:22px;background:#a0a0a0"></div>
<div class="ab" style="left:312px;top:267px;width:1px;height:22px;background:#a0a0a0"></div>
<div class="ab" style="left:371px;top:267px;width:1px;height:22px;background:#a0a0a0"></div>
<div class="ab" style="left:430px;top:267px;width:1px;height:22px;background:#a0a0a0"></div>
<div class="t" style="left:0px;top:274px;width:31px;text-align:right;font-size:11px;color:#666">7</div>
<div class="t" style="left:42px;top:274px;font-size:11px;color:#000;">14</div>
<div class="t" style="left:121px;top:274px;font-size:11px;color:#000;">No</div>
<div class="t" style="left:198px;top:274px;font-size:11px;color:#000;">No</div>
<div class="t" style="left:257px;top:274px;font-size:11px;color:#000;">24</div>
<div class="t" style="left:316px;top:274px;font-size:11px;color:#000;">48</div>
<div class="t" style="left:375px;top:274px;font-size:11px;color:#000;">0</div>
<div class="t" style="left:434px;top:274px;font-size:11px;color:#000;letter-spacing:-0.17px">2b5138d1-9585-480e-b2b2-58e1234567</div>
<div class="ab" style="left:0px;top:311px;width:38px;height:1px;background:#e6e6e6"></div>
<div class="ab" style="left:38px;top:311px;width:620px;height:1px;background:#a0a0a0"></div>
<div class="ab" style="left:117px;top:289px;width:1px;height:22px;background:#a0a0a0"></div>
<div class="ab" style="left:194px;top:289px;width:1px;height:22px;background:#a0a0a0"></div>
<div class="ab" style="left:253px;top:289px;width:1px;height:22px;background:#a0a0a0"></div>
<div class="ab" style="left:312px;top:289px;width:1px;height:22px;background:#a0a0a0"></div>
<div class="ab" style="left:371px;top:289px;width:1px;height:22px;background:#a0a0a0"></div>
<div class="ab" style="left:430px;top:289px;width:1px;height:22px;background:#a0a0a0"></div>
<div class="t" style="left:0px;top:296px;width:31px;text-align:right;font-size:11px;color:#666">8</div>
<div class="t" style="left:42px;top:296px;font-size:11px;color:#000;">16</div>
<div class="t" style="left:121px;top:296px;font-size:11px;color:#000;">No</div>
<div class="t" style="left:198px;top:296px;font-size:11px;color:#000;">No</div>
<div class="t" style="left:257px;top:296px;font-size:11px;color:#000;">24</div>
<div class="t" style="left:316px;top:296px;font-size:11px;color:#000;">72</div>
<div class="t" style="left:375px;top:296px;font-size:11px;color:#000;">0</div>
<div class="t" style="left:434px;top:296px;font-size:11px;color:#000;letter-spacing:-0.17px">2f3ffacf-9897-4ca4-aefe-3261bf12345</div>
<div class="ab" style="left:0px;top:333px;width:38px;height:1px;background:#e6e6e6"></div>
<div class="ab" style="left:38px;top:333px;width:620px;height:1px;background:#a0a0a0"></div>
<div class="ab" style="left:117px;top:311px;width:1px;height:22px;background:#a0a0a0"></div>
<div class="ab" style="left:194px;top:311px;width:1px;height:22px;background:#a0a0a0"></div>
<div class="ab" style="left:253px;top:311px;width:1px;height:22px;background:#a0a0a0"></div>
<div class="ab" style="left:312px;top:311px;width:1px;height:22px;background:#a0a0a0"></div>
<div class="ab" style="left:371px;top:311px;width:1px;height:22px;background:#a0a0a0"></div>
<div class="ab" style="left:430px;top:311px;width:1px;height:22px;background:#a0a0a0"></div>
<div class="t" style="left:0px;top:318px;width:31px;text-align:right;font-size:11px;color:#666">9</div>
<div class="t" style="left:42px;top:318px;font-size:11px;color:#000;">18</div>
<div class="t" style="left:121px;top:318px;font-size:11px;color:#000;">No</div>
<div class="t" style="left:198px;top:318px;font-size:11px;color:#000;">No</div>
<div class="t" style="left:257px;top:318px;font-size:11px;color:#000;">48</div>
<div class="t" style="left:316px;top:318px;font-size:11px;color:#000;">0</div>
<div class="t" style="left:375px;top:318px;font-size:11px;color:#000;">0</div>
<div class="t" style="left:434px;top:318px;font-size:11px;color:#000;letter-spacing:-0.17px">ce974ee5-71f5-4c56-aae0-b014123456</div>
<div class="ab" style="left:0px;top:355px;width:38px;height:1px;background:#e6e6e6"></div>
<div class="ab" style="left:38px;top:355px;width:620px;height:1px;background:#a0a0a0"></div>
<div class="ab" style="left:117px;top:333px;width:1px;height:22px;background:#a0a0a0"></div>
<div class="ab" style="left:194px;top:333px;width:1px;height:22px;background:#a0a0a0"></div>
<div class="ab" style="left:253px;top:333px;width:1px;height:22px;background:#a0a0a0"></div>
<div class="ab" style="left:312px;top:333px;width:1px;height:22px;background:#a0a0a0"></div>
<div class="ab" style="left:371px;top:333px;width:1px;height:22px;background:#a0a0a0"></div>
<div class="ab" style="left:430px;top:333px;width:1px;height:22px;background:#a0a0a0"></div>
<div class="t" style="left:0px;top:340px;width:31px;text-align:right;font-size:11px;color:#666">10</div>
<div class="t" style="left:42px;top:340px;font-size:11px;color:#000;">20</div>
<div class="t" style="left:121px;top:340px;font-size:11px;color:#000;">No</div>
<div class="t" style="left:198px;top:340px;font-size:11px;color:#000;">No</div>
<div class="t" style="left:257px;top:340px;font-size:11px;color:#000;">48</div>
<div class="t" style="left:316px;top:340px;font-size:11px;color:#000;">24</div>
<div class="t" style="left:375px;top:340px;font-size:11px;color:#000;">0</div>
<div class="t" style="left:434px;top:340px;font-size:11px;color:#000;letter-spacing:-0.17px">f1da10f9-3fe5-4e1a-b629-6d1c712345</div>
<div class="ab" style="left:0px;top:377px;width:38px;height:1px;background:#e6e6e6"></div>
<div class="ab" style="left:38px;top:377px;width:620px;height:1px;background:#a0a0a0"></div>
<div class="ab" style="left:117px;top:355px;width:1px;height:22px;background:#a0a0a0"></div>
<div class="ab" style="left:194px;top:355px;width:1px;height:22px;background:#a0a0a0"></div>
<div class="ab" style="left:253px;top:355px;width:1px;height:22px;background:#a0a0a0"></div>
<div class="ab" style="left:312px;top:355px;width:1px;height:22px;background:#a0a0a0"></div>
<div class="ab" style="left:371px;top:355px;width:1px;height:22px;background:#a0a0a0"></div>
<div class="ab" style="left:430px;top:355px;width:1px;height:22px;background:#a0a0a0"></div>
<div class="t" style="left:0px;top:362px;width:31px;text-align:right;font-size:11px;color:#666">11</div>
<div class="t" style="left:42px;top:362px;font-size:11px;color:#000;">22</div>
<div class="t" style="left:121px;top:362px;font-size:11px;color:#000;">No</div>
<div class="t" style="left:198px;top:362px;font-size:11px;color:#000;">No</div>
<div class="t" style="left:257px;top:362px;font-size:11px;color:#000;">48</div>
<div class="t" style="left:316px;top:362px;font-size:11px;color:#000;">48</div>
<div class="t" style="left:375px;top:362px;font-size:11px;color:#000;">0</div>
<div class="t" style="left:434px;top:362px;font-size:11px;color:#000;letter-spacing:-0.17px">831ed0b1-f780-411f-93f2-7ef661d66e34</div>
<div class="ab" style="left:0px;top:399px;width:38px;height:1px;background:#e6e6e6"></div>
<div class="ab" style="left:38px;top:399px;width:620px;height:1px;background:#a0a0a0"></div>
<div class="ab" style="left:117px;top:377px;width:1px;height:22px;background:#a0a0a0"></div>
<div class="ab" style="left:194px;top:377px;width:1px;height:22px;background:#a0a0a0"></div>
<div class="ab" style="left:253px;top:377px;width:1px;height:22px;background:#a0a0a0"></div>
<div class="ab" style="left:312px;top:377px;width:1px;height:22px;background:#a0a0a0"></div>
<div class="ab" style="left:371px;top:377px;width:1px;height:22px;background:#a0a0a0"></div>
<div class="ab" style="left:430px;top:377px;width:1px;height:22px;background:#a0a0a0"></div>
<div class="t" style="left:0px;top:384px;width:31px;text-align:right;font-size:11px;color:#666">12</div>
<div class="t" style="left:42px;top:384px;font-size:11px;color:#000;">24</div>
<div class="t" style="left:121px;top:384px;font-size:11px;color:#000;">No</div>
<div class="t" style="left:198px;top:384px;font-size:11px;color:#000;">No</div>
<div class="t" style="left:257px;top:384px;font-size:11px;color:#000;">48</div>
<div class="t" style="left:316px;top:384px;font-size:11px;color:#000;">72</div>
<div class="t" style="left:375px;top:384px;font-size:11px;color:#000;">0</div>
<div class="t" style="left:434px;top:384px;font-size:11px;color:#000;letter-spacing:-0.17px">0a0a0a0a-0a0a-0a0a-0a0a-0a0a0a0a0a0a</div>
<div class="ab" style="left:658px;top:102px;width:20px;height:280px;background:#f0f0f0;border-left:2px solid #a0a0a0"></div>
<svg class="ab" style="left:663px;top:369px" width="11" height="7" viewBox="0 0 11 7"><path d="M1 1L5.5 5.5L10 1" stroke="#606060" stroke-width="1.5" fill="none"/></svg>
<div class="ab" style="left:0;top:382px;width:700px;height:2px;background:#1e1e1e"></div>
<div class="ab" style="left:0;top:384px;width:700px;height:30px;background:#f0f0f0"></div>
<div class="ab" style="left:369px;top:385px;width:100px;height:24px;background:#cccccc;border:1px solid #bfbfbf"></div>
<div class="t" style="left:369px;top:390px;width:100px;text-align:center;font-size:11px;color:#a0a0a0">Undo Last Apply</div>
<div class="ab" style="left:472px;top:385px;width:102px;height:24px;background:#cccccc;border:1px solid #bfbfbf"></div>
<div class="t" style="left:472px;top:390px;width:102px;text-align:center;font-size:11px;color:#a0a0a0">Apply to Model</div>
<div class="ab" style="left:576px;top:385px;width:102px;height:24px;background:#e1e1e1;border:1px solid #adadad"></div>
<div class="t" style="left:576px;top:390px;width:102px;text-align:center;font-size:11px;color:#000">Done</div>
</div>
<div class="ab" id="xl" style="left:627px;top:50px;width:773px;height:565px;background:#e6e6e6;border:1px solid #4a4a4a;overflow:hidden">
<div class="ab" style="left:0px;top:0px;width:772px;height:31px;background:#f3f2f1"></div>
<div class="ab" style="left:0px;top:31px;width:772px;height:1px;background:#d8d6d4"></div>
<div class="t" style="left:16px;top:9px;font-size:13px;color:#444">File</div>
<div class="t" style="left:61px;top:9px;font-size:13px;color:#444">Home</div>
<div class="t" style="left:111px;top:9px;font-size:13px;color:#444">Insert</div>
<div class="t" style="left:157px;top:9px;font-size:13px;color:#444">Draw</div>
<div class="t" style="left:202px;top:9px;font-size:13px;color:#444">Page Layout</div>
<div class="t" style="left:288px;top:9px;font-size:13px;color:#444">Formulas</div>
<div class="t" style="left:355px;top:9px;font-size:13px;color:#444">Data</div>
<div class="t" style="left:396px;top:9px;font-size:13px;color:#444">Review</div>
<div class="t" style="left:449px;top:9px;font-size:13px;color:#444">View</div>
<div class="t" style="left:489px;top:9px;font-size:13px;color:#444">Help</div>
<div class="t" style="left:530px;top:9px;font-size:13px;color:#444">Acrobat</div>
<div class="ab" style="left:60px;top:25px;width:38px;height:3px;background:#1e7145"></div>
<div class="ab" style="left:103px;top:6px;width:1px;height:18px;background:#e1dfdd"></div>
<div class="ab" style="left:193px;top:6px;width:1px;height:18px;background:#e1dfdd"></div>
<div class="ab" style="left:280px;top:6px;width:1px;height:18px;background:#e1dfdd"></div>
<div class="ab" style="left:348px;top:6px;width:1px;height:18px;background:#e1dfdd"></div>
<div class="ab" style="left:388px;top:6px;width:1px;height:18px;background:#e1dfdd"></div>
<div class="ab" style="left:442px;top:6px;width:1px;height:18px;background:#e1dfdd"></div>
<div class="ab" style="left:482px;top:6px;width:1px;height:18px;background:#e1dfdd"></div>
<div class="ab" style="left:522px;top:6px;width:1px;height:18px;background:#e1dfdd"></div>
<div class="ab" style="left:582px;top:6px;width:1px;height:18px;background:#e1dfdd"></div>
<svg class="ab" style="left:593px;top:6px" width="18" height="18" viewBox="0 0 18 18"><circle cx="9.4" cy="7.3" r="5.3" fill="none" stroke="#555" stroke-width="1.1"/><path d="M5.6 11.2L1.2 16.7" stroke="#555" stroke-width="1.2"/></svg>
<div class="t" style="left:620px;top:9px;font-size:13px;color:#444">Search</div>
<div class="ab" style="left:690px;top:3px;width:32px;height:23px;background:#fff;border:1px solid #e1dfdd;border-radius:2px"></div>
<svg class="ab" style="left:698px;top:8px" width="16" height="14" viewBox="0 0 16 14"><path d="M2.25 5V12.75H11.75V8" fill="none" stroke="#217346" stroke-width="1.1"/><path d="M4.6 8.6C5 5.3 7 3.1 9.8 3V1.4L13.5 5.2L9.8 8.2V6.3C7.6 6.2 5.8 7 4.6 8.6Z" fill="none" stroke="#217346" stroke-width="1" stroke-linejoin="round"/></svg>
<div class="ab" style="left:730px;top:3px;width:32px;height:23px;background:#fff;border:1px solid #e1dfdd;border-radius:2px"></div>
<svg class="ab" style="left:739px;top:9px" width="14" height="12" viewBox="0 0 14 12"><path d="M1.75 1.25H12.5V7.5H6L3.2 10.5V7.5H1.75Z" fill="none" stroke="#217346" stroke-width="1.1" stroke-linejoin="round"/></svg>
<div class="ab" style="left:4px;top:42px;width:102px;height:26px;background:#fff;border:1px solid #c6c6c6"></div>
<div class="t" style="left:11px;top:49px;font-size:13px;color:#333"><i>A4</i></div>
<svg class="ab" style="left:91px;top:52px" width="10" height="6" viewBox="0 0 10 6"><path d="M0.5 0.5H9.5L5 5.5Z" fill="#777"/></svg>
<div class="ab" style="left:120px;top:50px;width:2px;height:2px;background:#999"></div>
<div class="ab" style="left:120px;top:54px;width:2px;height:2px;background:#999"></div>
<div class="ab" style="left:120px;top:58px;width:2px;height:2px;background:#999"></div>
<div class="ab" style="left:136px;top:42px;width:110px;height:26px;background:#fff;border:1px solid #c6c6c6"></div>
<svg class="ab" style="left:149px;top:50px" width="12" height="11" viewBox="0 0 12 11"><path d="M1 1L11 10M11 1L1 10" stroke="#c3c3c3" stroke-width="1.7"/></svg>
<svg class="ab" style="left:185px;top:49px" width="14" height="12" viewBox="0 0 14 12"><path d="M1 6.5L5 10L13 1.5" stroke="#c8c8c8" stroke-width="2.3" fill="none"/></svg>
<div class="t" style="left:221px;top:47px;font-family:"Liberation Serif",serif;font-size:15px;color:#5a5a5a;font-weight:700"><i>f</i><span style="font-size:11px"><i>x</i></span></div>
<div class="ab" style="left:249px;top:42px;width:521px;height:26px;background:#fff;border:1px solid #c6c6c6"></div>
<div class="t" style="left:261px;top:49px;font-size:13px;color:#222">2</div>
<svg class="ab" style="left:756px;top:52px" width="10" height="7" viewBox="0 0 10 7"><path d="M1 1L5 5L9 1" stroke="#555" stroke-width="1.5" fill="none"/></svg>
<div class="ab" style="left:0px;top:78px;width:752px;height:20px;background:#e6e6e6"></div>
<div class="ab" style="left:24px;top:78px;width:90px;height:19px;background:#d2d2d2"></div>
<div class="ab" style="left:24px;top:96px;width:90px;height:2px;background:#217346"></div>
<div class="t" style="left:24px;top:81px;width:90px;text-align:center;font-size:13px;color:#1e6b40">A</div>
<div class="t" style="left:114px;top:81px;width:86px;text-align:center;font-size:13px;color:#333">B</div>
<div class="t" style="left:200px;top:81px;width:64px;text-align:center;font-size:13px;color:#333">C</div>
<div class="t" style="left:264px;top:81px;width:64px;text-align:center;font-size:13px;color:#333">D</div>
<div class="t" style="left:328px;top:81px;width:64px;text-align:center;font-size:13px;color:#333">E</div>
<div class="t" style="left:392px;top:81px;width:64px;text-align:center;font-size:13px;color:#333">F</div>
<div class="t" style="left:456px;top:81px;width:268px;text-align:center;font-size:13px;color:#333">G</div>
<div class="ab" style="left:114px;top:78px;width:1px;height:19px;background:#ababab"></div>
<div class="ab" style="left:200px;top:78px;width:1px;height:19px;background:#c0c0c0"></div>
<div class="ab" style="left:264px;top:78px;width:1px;height:19px;background:#c0c0c0"></div>
<div class="ab" style="left:328px;top:78px;width:1px;height:19px;background:#c0c0c0"></div>
<div class="ab" style="left:392px;top:78px;width:1px;height:19px;background:#c0c0c0"></div>
<div class="ab" style="left:456px;top:78px;width:1px;height:19px;background:#c0c0c0"></div>
<div class="ab" style="left:724px;top:78px;width:1px;height:19px;background:#c0c0c0"></div>
<div class="ab" style="left:0px;top:97px;width:752px;height:1px;background:#bdbdbd"></div>
<svg class="ab" style="left:9px;top:82px" width="13" height="13" viewBox="0 0 13 13"><path d="M12 0.5V12H0.5Z" fill="#b4b4b4"/></svg>
<div class="ab" style="left:0px;top:98px;width:752px;height:417px;background:#fff"></div>
<div class="ab" style="left:0px;top:98px;width:24px;height:417px;background:#e6e6e6"></div>
<div class="ab" style="left:0px;top:158px;width:24px;height:20px;background:#d2d2d2"></div>
<div class="ab" style="left:23px;top:98px;width:1px;height:417px;background:#bdbdbd"></div>
<div class="t" style="left:0px;top:102px;width:24px;text-align:center;font-size:13px;color:#333">1</div>
<div class="ab" style="left:0px;top:117px;width:24px;height:1px;background:#c8c8c8"></div>
<div class="t" style="left:0px;top:122px;width:24px;text-align:center;font-size:13px;color:#333">2</div>
<div class="ab" style="left:0px;top:137px;width:24px;height:1px;background:#c8c8c8"></div>
<div class="t" style="left:0px;top:142px;width:24px;text-align:center;font-size:13px;color:#333">3</div>
<div class="ab" style="left:0px;top:157px;width:24px;height:1px;background:#c8c8c8"></div>
<div class="t" style="left:0px;top:162px;width:24px;text-align:center;font-size:13px;color:#1e6b40">4</div>
<div class="ab" style="left:0px;top:177px;width:24px;height:1px;background:#c8c8c8"></div>
<div class="t" style="left:0px;top:182px;width:24px;text-align:center;font-size:13px;color:#333">5</div>
<div class="ab" style="left:0px;top:197px;width:24px;height:1px;background:#c8c8c8"></div>
<div class="t" style="left:0px;top:202px;width:24px;text-align:center;font-size:13px;color:#333">6</div>
<div class="ab" style="left:0px;top:217px;width:24px;height:1px;background:#c8c8c8"></div>
<div class="t" style="left:0px;top:222px;width:24px;text-align:center;font-size:13px;color:#333">7</div>
<div class="ab" style="left:0px;top:237px;width:24px;height:1px;background:#c8c8c8"></div>
<div class="t" style="left:0px;top:242px;width:24px;text-align:center;font-size:13px;color:#333">8</div>
<div class="ab" style="left:0px;top:257px;width:24px;height:1px;background:#c8c8c8"></div>
<div class="t" style="left:0px;top:262px;width:24px;text-align:center;font-size:13px;color:#333">9</div>
<div class="ab" style="left:0px;top:277px;width:24px;height:1px;background:#c8c8c8"></div>
<div class="t" style="left:0px;top:282px;width:24px;text-align:center;font-size:13px;color:#333">10</div>
<div class="ab" style="left:0px;top:297px;width:24px;height:1px;background:#c8c8c8"></div>
<div class="t" style="left:0px;top:302px;width:24px;text-align:center;font-size:13px;color:#333">11</div>
<div class="ab" style="left:0px;top:317px;width:24px;height:1px;background:#c8c8c8"></div>
<div class="t" style="left:0px;top:322px;width:24px;text-align:center;font-size:13px;color:#333">12</div>
<div class="ab" style="left:0px;top:337px;width:24px;height:1px;background:#c8c8c8"></div>
<div class="t" style="left:0px;top:342px;width:24px;text-align:center;font-size:13px;color:#333">13</div>
<div class="ab" style="left:0px;top:357px;width:24px;height:1px;background:#c8c8c8"></div>
<div class="t" style="left:0px;top:362px;width:24px;text-align:center;font-size:13px;color:#333">14</div>
<div class="ab" style="left:0px;top:377px;width:24px;height:1px;background:#c8c8c8"></div>
<div class="t" style="left:0px;top:382px;width:24px;text-align:center;font-size:13px;color:#333">15</div>
<div class="ab" style="left:0px;top:397px;width:24px;height:1px;background:#c8c8c8"></div>
<div class="t" style="left:0px;top:402px;width:24px;text-align:center;font-size:13px;color:#333">16</div>
<div class="ab" style="left:0px;top:417px;width:24px;height:1px;background:#c8c8c8"></div>
<div class="t" style="left:0px;top:422px;width:24px;text-align:center;font-size:13px;color:#333">17</div>
<div class="ab" style="left:0px;top:437px;width:24px;height:1px;background:#c8c8c8"></div>
<div class="t" style="left:0px;top:442px;width:24px;text-align:center;font-size:13px;color:#333">18</div>
<div class="ab" style="left:0px;top:457px;width:24px;height:1px;background:#c8c8c8"></div>
<div class="t" style="left:0px;top:462px;width:24px;text-align:center;font-size:13px;color:#333">19</div>
<div class="ab" style="left:0px;top:477px;width:24px;height:1px;background:#c8c8c8"></div>
<div class="t" style="left:0px;top:482px;width:24px;text-align:center;font-size:13px;color:#333">20</div>
<div class="ab" style="left:0px;top:497px;width:24px;height:1px;background:#c8c8c8"></div>
<div class="t" style="left:0px;top:502px;width:24px;text-align:center;font-size:13px;color:#333">21</div>
<div class="ab" style="left:0px;top:517px;width:24px;height:1px;background:#c8c8c8"></div>
<div class="ab" style="left:24px;top:98px;width:700px;height:19px;background:#33cccc"></div>
<div class="ab" style="left:24px;top:117px;width:700px;height:40px;background:#ffff00"></div>
<div class="ab" style="left:24px;top:117px;width:728px;height:1px;#c0c0c0"></div>
<div class="ab" style="left:24px;top:137px;width:728px;height:1px;#c0c0c0"></div>
<div class="ab" style="left:24px;top:157px;width:728px;height:1px;#c0c0c0"></div>
<div class="ab" style="left:24px;top:177px;width:728px;height:1px;background:#d4d4d4"></div>
<div class="ab" style="left:24px;top:197px;width:728px;height:1px;background:#d4d4d4"></div>
<div class="ab" style="left:24px;top:217px;width:728px;height:1px;background:#d4d4d4"></div>
<div class="ab" style="left:24px;top:237px;width:728px;height:1px;background:#d4d4d4"></div>
<div class="ab" style="left:24px;top:257px;width:728px;height:1px;background:#d4d4d4"></div>
<div class="ab" style="left:24px;top:277px;width:728px;height:1px;background:#d4d4d4"></div>
<div class="ab" style="left:24px;top:297px;width:728px;height:1px;background:#d4d4d4"></div>
<div class="ab" style="left:24px;top:317px;width:728px;height:1px;background:#d4d4d4"></div>
<div class="ab" style="left:24px;top:337px;width:728px;height:1px;background:#d4d4d4"></div>
<div class="ab" style="left:24px;top:357px;width:728px;height:1px;background:#d4d4d4"></div>
<div class="ab" style="left:24px;top:377px;width:728px;height:1px;background:#d4d4d4"></div>
<div class="ab" style="left:24px;top:397px;width:728px;height:1px;background:#d4d4d4"></div>
<div class="ab" style="left:24px;top:417px;width:728px;height:1px;background:#d4d4d4"></div>
<div class="ab" style="left:24px;top:437px;width:728px;height:1px;background:#d4d4d4"></div>
<div class="ab" style="left:24px;top:457px;width:728px;height:1px;background:#d4d4d4"></div>
<div class="ab" style="left:24px;top:477px;width:728px;height:1px;background:#d4d4d4"></div>
<div class="ab" style="left:24px;top:497px;width:728px;height:1px;background:#d4d4d4"></div>
<div class="ab" style="left:24px;top:517px;width:728px;height:1px;background:#d4d4d4"></div>
<div class="ab" style="left:114px;top:117px;width:1px;height:41px;background:#c6c6c6"></div>
<div class="ab" style="left:114px;top:158px;width:1px;height:357px;background:#d4d4d4"></div>
<div class="ab" style="left:200px;top:117px;width:1px;height:41px;background:#c6c6c6"></div>
<div class="ab" style="left:200px;top:158px;width:1px;height:357px;background:#d4d4d4"></div>
<div class="ab" style="left:264px;top:117px;width:1px;height:41px;background:#c6c6c6"></div>
<div class="ab" style="left:264px;top:158px;width:1px;height:357px;background:#d4d4d4"></div>
<div class="ab" style="left:328px;top:117px;width:1px;height:41px;background:#c6c6c6"></div>
<div class="ab" style="left:328px;top:158px;width:1px;height:357px;background:#d4d4d4"></div>
<div class="ab" style="left:392px;top:117px;width:1px;height:41px;background:#c6c6c6"></div>
<div class="ab" style="left:392px;top:158px;width:1px;height:357px;background:#d4d4d4"></div>
<div class="ab" style="left:456px;top:117px;width:1px;height:41px;background:#c6c6c6"></div>
<div class="ab" style="left:456px;top:158px;width:1px;height:357px;background:#d4d4d4"></div>
<div class="ab" style="left:724px;top:117px;width:1px;height:41px;background:#c6c6c6"></div>
<div class="ab" style="left:724px;top:158px;width:1px;height:357px;background:#d4d4d4"></div>
<div class="ab" style="left:24px;top:117px;width:700px;height:1px;background:#c6c6c6"></div>
<div class="ab" style="left:24px;top:137px;width:700px;height:1px;background:#c6c6c6"></div>
<div class="ab" style="left:24px;top:157px;width:728px;height:1px;background:#9e9e9e"></div>
<div class="ab" style="left:752px;top:98px;width:1px;height:417px;background:#9e9e9e"></div>
<div class="ab" style="left:24px;top:97px;width:728px;height:1px;background:#9e9e9e"></div>
<div class="t" style="left:28px;top:102px;font-size:13px;font-weight:700;color:#000;letter-spacing:-0.23px">TABLE:  Point Object Connectivity</div>
<div class="t" style="left:27px;top:122px;width:87px;text-align:left;font-size:13px;font-weight:700;color:#000;letter-spacing:0px">UniqueName</div>
<div class="t" style="left:117px;top:122px;width:83px;text-align:left;font-size:13px;font-weight:700;color:#000;letter-spacing:0px">Is Auto Point</div>
<div class="t" style="left:200px;top:122px;width:64px;text-align:center;font-size:13px;font-weight:700;color:#000;letter-spacing:0px">IsSpecial</div>
<div class="t" style="left:264px;top:122px;width:64px;text-align:center;font-size:13px;font-weight:700;color:#000;letter-spacing:0px">X</div>
<div class="t" style="left:328px;top:122px;width:64px;text-align:center;font-size:13px;font-weight:700;color:#000;letter-spacing:0px">Y</div>
<div class="t" style="left:392px;top:122px;width:64px;text-align:center;font-size:13px;font-weight:700;color:#000;letter-spacing:0px">Z</div>
<div class="t" style="left:456px;top:122px;width:268px;text-align:center;font-size:13px;font-weight:700;color:#000;letter-spacing:0px">GUID</div>
<div class="t" style="left:264px;top:142px;width:64px;text-align:center;font-size:13px;color:#000">ft</div>
<div class="t" style="left:328px;top:142px;width:64px;text-align:center;font-size:13px;color:#000">ft</div>
<div class="t" style="left:392px;top:142px;width:64px;text-align:center;font-size:13px;color:#000">ft</div>
<svg class="ab" style="left:25px;top:158px" width="6" height="6" viewBox="0 0 6 6"><path d="M0 0H6L0 6Z" fill="#1e7b3a"/></svg>
<div class="t" style="left:27px;top:162px;font-size:13px;color:#000">2</div>
<div class="t" style="left:117px;top:162px;font-size:13px;color:#000">No</div>
<div class="t" style="left:203px;top:162px;font-size:13px;color:#000">No</div>
<div class="t" style="left:264px;top:162px;width:62px;text-align:right;font-size:13px;color:#000">0</div>
<div class="t" style="left:328px;top:162px;width:62px;text-align:right;font-size:13px;color:#000">0</div>
<div class="t" style="left:392px;top:162px;width:62px;text-align:right;font-size:13px;color:#000">0</div>
<div class="t" style="left:459px;top:162px;font-size:13px;color:#000;letter-spacing:0.07px">3e8741ad-f046-4473-b1ad-6b3647651cf0</div>
<svg class="ab" style="left:25px;top:178px" width="6" height="6" viewBox="0 0 6 6"><path d="M0 0H6L0 6Z" fill="#1e7b3a"/></svg>
<div class="t" style="left:27px;top:182px;font-size:13px;color:#000">4</div>
<div class="t" style="left:117px;top:182px;font-size:13px;color:#000">No</div>
<div class="t" style="left:203px;top:182px;font-size:13px;color:#000">No</div>
<div class="t" style="left:264px;top:182px;width:62px;text-align:right;font-size:13px;color:#000">0</div>
<div class="t" style="left:328px;top:182px;width:62px;text-align:right;font-size:13px;color:#000">24</div>
<div class="t" style="left:392px;top:182px;width:62px;text-align:right;font-size:13px;color:#000">0</div>
<div class="t" style="left:459px;top:182px;font-size:13px;color:#000;letter-spacing:0.07px">af65796c-ca7c-4b1d-b195-83dc52d36567</div>
<svg class="ab" style="left:25px;top:198px" width="6" height="6" viewBox="0 0 6 6"><path d="M0 0H6L0 6Z" fill="#1e7b3a"/></svg>
<div class="t" style="left:27px;top:202px;font-size:13px;color:#000">6</div>
<div class="t" style="left:117px;top:202px;font-size:13px;color:#000">No</div>
<div class="t" style="left:203px;top:202px;font-size:13px;color:#000">No</div>
<div class="t" style="left:264px;top:202px;width:62px;text-align:right;font-size:13px;color:#000">0</div>
<div class="t" style="left:328px;top:202px;width:62px;text-align:right;font-size:13px;color:#000">48</div>
<div class="t" style="left:392px;top:202px;width:62px;text-align:right;font-size:13px;color:#000">0</div>
<div class="t" style="left:459px;top:202px;font-size:13px;color:#000;letter-spacing:0.07px">9255d3d3-198d-4a0b-9d96-5554c599ebd1</div>
<svg class="ab" style="left:25px;top:218px" width="6" height="6" viewBox="0 0 6 6"><path d="M0 0H6L0 6Z" fill="#1e7b3a"/></svg>
<div class="t" style="left:27px;top:222px;font-size:13px;color:#000">8</div>
<div class="t" style="left:117px;top:222px;font-size:13px;color:#000">No</div>
<div class="t" style="left:203px;top:222px;font-size:13px;color:#000">No</div>
<div class="t" style="left:264px;top:222px;width:62px;text-align:right;font-size:13px;color:#000">0</div>
<div class="t" style="left:328px;top:222px;width:62px;text-align:right;font-size:13px;color:#000">72</div>
<div class="t" style="left:392px;top:222px;width:62px;text-align:right;font-size:13px;color:#000">0</div>
<div class="t" style="left:459px;top:222px;font-size:13px;color:#000;letter-spacing:0.07px">0ad5d073-e504-417e-b0ed-f869fa8276a3</div>
<svg class="ab" style="left:25px;top:238px" width="6" height="6" viewBox="0 0 6 6"><path d="M0 0H6L0 6Z" fill="#1e7b3a"/></svg>
<div class="t" style="left:27px;top:242px;font-size:13px;color:#000">10</div>
<div class="t" style="left:117px;top:242px;font-size:13px;color:#000">No</div>
<div class="t" style="left:203px;top:242px;font-size:13px;color:#000">No</div>
<div class="t" style="left:264px;top:242px;width:62px;text-align:right;font-size:13px;color:#000">24</div>
<div class="t" style="left:328px;top:242px;width:62px;text-align:right;font-size:13px;color:#000">0</div>
<div class="t" style="left:392px;top:242px;width:62px;text-align:right;font-size:13px;color:#000">0</div>
<div class="t" style="left:459px;top:242px;font-size:13px;color:#000;letter-spacing:0.07px">337bec5b-5cfa-45a0-9a60-aa47db157863</div>
<svg class="ab" style="left:25px;top:258px" width="6" height="6" viewBox="0 0 6 6"><path d="M0 0H6L0 6Z" fill="#1e7b3a"/></svg>
<div class="t" style="left:27px;top:262px;font-size:13px;color:#000">12</div>
<div class="t" style="left:117px;top:262px;font-size:13px;color:#000">No</div>
<div class="t" style="left:203px;top:262px;font-size:13px;color:#000">No</div>
<div class="t" style="left:264px;top:262px;width:62px;text-align:right;font-size:13px;color:#000">24</div>
<div class="t" style="left:328px;top:262px;width:62px;text-align:right;font-size:13px;color:#000">24</div>
<div class="t" style="left:392px;top:262px;width:62px;text-align:right;font-size:13px;color:#000">0</div>
<div class="t" style="left:459px;top:262px;font-size:13px;color:#000;letter-spacing:0.07px">01e99f17-01ee-4ef7-a810-358c6583c070</div>
<svg class="ab" style="left:25px;top:278px" width="6" height="6" viewBox="0 0 6 6"><path d="M0 0H6L0 6Z" fill="#1e7b3a"/></svg>
<div class="t" style="left:27px;top:282px;font-size:13px;color:#000">14</div>
<div class="t" style="left:117px;top:282px;font-size:13px;color:#000">No</div>
<div class="t" style="left:203px;top:282px;font-size:13px;color:#000">No</div>
<div class="t" style="left:264px;top:282px;width:62px;text-align:right;font-size:13px;color:#000">24</div>
<div class="t" style="left:328px;top:282px;width:62px;text-align:right;font-size:13px;color:#000">48</div>
<div class="t" style="left:392px;top:282px;width:62px;text-align:right;font-size:13px;color:#000">0</div>
<div class="t" style="left:459px;top:282px;font-size:13px;color:#000;letter-spacing:0.07px">fb91b3a6-6cfb-4a87-957f-a08bd8ca43a0</div>
<svg class="ab" style="left:25px;top:298px" width="6" height="6" viewBox="0 0 6 6"><path d="M0 0H6L0 6Z" fill="#1e7b3a"/></svg>
<div class="t" style="left:27px;top:302px;font-size:13px;color:#000">16</div>
<div class="t" style="left:117px;top:302px;font-size:13px;color:#000">No</div>
<div class="t" style="left:203px;top:302px;font-size:13px;color:#000">No</div>
<div class="t" style="left:264px;top:302px;width:62px;text-align:right;font-size:13px;color:#000">24</div>
<div class="t" style="left:328px;top:302px;width:62px;text-align:right;font-size:13px;color:#000">72</div>
<div class="t" style="left:392px;top:302px;width:62px;text-align:right;font-size:13px;color:#000">0</div>
<div class="t" style="left:459px;top:302px;font-size:13px;color:#000;letter-spacing:0.07px">d6fb9d32-b3fd-4b90-ab85-d364c28b27aa</div>
<svg class="ab" style="left:25px;top:318px" width="6" height="6" viewBox="0 0 6 6"><path d="M0 0H6L0 6Z" fill="#1e7b3a"/></svg>
<div class="t" style="left:27px;top:322px;font-size:13px;color:#000">18</div>
<div class="t" style="left:117px;top:322px;font-size:13px;color:#000">No</div>
<div class="t" style="left:203px;top:322px;font-size:13px;color:#000">No</div>
<div class="t" style="left:264px;top:322px;width:62px;text-align:right;font-size:13px;color:#000">48</div>
<div class="t" style="left:328px;top:322px;width:62px;text-align:right;font-size:13px;color:#000">0</div>
<div class="t" style="left:392px;top:322px;width:62px;text-align:right;font-size:13px;color:#000">0</div>
<div class="t" style="left:459px;top:322px;font-size:13px;color:#000;letter-spacing:0.07px">985879db-3bdb-4fac-ba08-8806304e45af</div>
<svg class="ab" style="left:25px;top:338px" width="6" height="6" viewBox="0 0 6 6"><path d="M0 0H6L0 6Z" fill="#1e7b3a"/></svg>
<div class="t" style="left:27px;top:342px;font-size:13px;color:#000">20</div>
<div class="t" style="left:117px;top:342px;font-size:13px;color:#000">No</div>
<div class="t" style="left:203px;top:342px;font-size:13px;color:#000">No</div>
<div class="t" style="left:264px;top:342px;width:62px;text-align:right;font-size:13px;color:#000">48</div>
<div class="t" style="left:328px;top:342px;width:62px;text-align:right;font-size:13px;color:#000">24</div>
<div class="t" style="left:392px;top:342px;width:62px;text-align:right;font-size:13px;color:#000">0</div>
<div class="t" style="left:459px;top:342px;font-size:13px;color:#000;letter-spacing:0.07px">b06e2c89-18ee-41e5-8c03-c70cca564121</div>
<svg class="ab" style="left:25px;top:358px" width="6" height="6" viewBox="0 0 6 6"><path d="M0 0H6L0 6Z" fill="#1e7b3a"/></svg>
<div class="t" style="left:27px;top:362px;font-size:13px;color:#000">22</div>
<div class="t" style="left:117px;top:362px;font-size:13px;color:#000">No</div>
<div class="t" style="left:203px;top:362px;font-size:13px;color:#000">No</div>
<div class="t" style="left:264px;top:362px;width:62px;text-align:right;font-size:13px;color:#000">48</div>
<div class="t" style="left:328px;top:362px;width:62px;text-align:right;font-size:13px;color:#000">48</div>
<div class="t" style="left:392px;top:362px;width:62px;text-align:right;font-size:13px;color:#000">0</div>
<div class="t" style="left:459px;top:362px;font-size:13px;color:#000;letter-spacing:0.07px">9d911468-512f-42ca-8712-b19e5cf2bfe9</div>
<svg class="ab" style="left:25px;top:378px" width="6" height="6" viewBox="0 0 6 6"><path d="M0 0H6L0 6Z" fill="#1e7b3a"/></svg>
<div class="t" style="left:27px;top:382px;font-size:13px;color:#000">24</div>
<div class="t" style="left:117px;top:382px;font-size:13px;color:#000">No</div>
<div class="t" style="left:203px;top:382px;font-size:13px;color:#000">No</div>
<div class="t" style="left:264px;top:382px;width:62px;text-align:right;font-size:13px;color:#000">48</div>
<div class="t" style="left:328px;top:382px;width:62px;text-align:right;font-size:13px;color:#000">72</div>
<div class="t" style="left:392px;top:382px;width:62px;text-align:right;font-size:13px;color:#000">0</div>
<div class="t" style="left:459px;top:382px;font-size:13px;color:#000;letter-spacing:0.07px">2089b599-fa9d-42c6-864b-741608ff167a</div>
<svg class="ab" style="left:25px;top:398px" width="6" height="6" viewBox="0 0 6 6"><path d="M0 0H6L0 6Z" fill="#1e7b3a"/></svg>
<div class="t" style="left:27px;top:402px;font-size:13px;color:#000">26</div>
<div class="t" style="left:117px;top:402px;font-size:13px;color:#000">No</div>
<div class="t" style="left:203px;top:402px;font-size:13px;color:#000">No</div>
<div class="t" style="left:264px;top:402px;width:62px;text-align:right;font-size:13px;color:#000">72</div>
<div class="t" style="left:328px;top:402px;width:62px;text-align:right;font-size:13px;color:#000">0</div>
<div class="t" style="left:392px;top:402px;width:62px;text-align:right;font-size:13px;color:#000">0</div>
<div class="t" style="left:459px;top:402px;font-size:13px;color:#000;letter-spacing:0.07px">2b8ac8bf-1ea9-4da5-84aa-383cc3c1712f</div>
<svg class="ab" style="left:25px;top:418px" width="6" height="6" viewBox="0 0 6 6"><path d="M0 0H6L0 6Z" fill="#1e7b3a"/></svg>
<div class="t" style="left:27px;top:422px;font-size:13px;color:#000">28</div>
<div class="t" style="left:117px;top:422px;font-size:13px;color:#000">No</div>
<div class="t" style="left:203px;top:422px;font-size:13px;color:#000">No</div>
<div class="t" style="left:264px;top:422px;width:62px;text-align:right;font-size:13px;color:#000">72</div>
<div class="t" style="left:328px;top:422px;width:62px;text-align:right;font-size:13px;color:#000">24</div>
<div class="t" style="left:392px;top:422px;width:62px;text-align:right;font-size:13px;color:#000">0</div>
<div class="t" style="left:459px;top:422px;font-size:13px;color:#000;letter-spacing:0.07px">c1748658-efba-4232-8c45-80bd2f960ac7</div>
<svg class="ab" style="left:25px;top:438px" width="6" height="6" viewBox="0 0 6 6"><path d="M0 0H6L0 6Z" fill="#1e7b3a"/></svg>
<div class="t" style="left:27px;top:442px;font-size:13px;color:#000">30</div>
<div class="t" style="left:117px;top:442px;font-size:13px;color:#000">No</div>
<div class="t" style="left:203px;top:442px;font-size:13px;color:#000">No</div>
<div class="t" style="left:264px;top:442px;width:62px;text-align:right;font-size:13px;color:#000">72</div>
<div class="t" style="left:328px;top:442px;width:62px;text-align:right;font-size:13px;color:#000">48</div>
<div class="t" style="left:392px;top:442px;width:62px;text-align:right;font-size:13px;color:#000">0</div>
<div class="t" style="left:459px;top:442px;font-size:13px;color:#000;letter-spacing:0.07px">ad398785-efff-4697-b9f4-1ec0d014467b</div>
<svg class="ab" style="left:25px;top:458px" width="6" height="6" viewBox="0 0 6 6"><path d="M0 0H6L0 6Z" fill="#1e7b3a"/></svg>
<div class="t" style="left:27px;top:462px;font-size:13px;color:#000">32</div>
<div class="t" style="left:117px;top:462px;font-size:13px;color:#000">No</div>
<div class="t" style="left:203px;top:462px;font-size:13px;color:#000">No</div>
<div class="t" style="left:264px;top:462px;width:62px;text-align:right;font-size:13px;color:#000">72</div>
<div class="t" style="left:328px;top:462px;width:62px;text-align:right;font-size:13px;color:#000">72</div>
<div class="t" style="left:392px;top:462px;width:62px;text-align:right;font-size:13px;color:#000">0</div>
<div class="t" style="left:459px;top:462px;font-size:13px;color:#000;letter-spacing:0.07px">2405eae1-f1e2-41ea-b7d3-cb39825ca036</div>
<svg class="ab" style="left:25px;top:478px" width="6" height="6" viewBox="0 0 6 6"><path d="M0 0H6L0 6Z" fill="#1e7b3a"/></svg>
<div class="t" style="left:27px;top:482px;font-size:13px;color:#000">33</div>
<div class="t" style="left:117px;top:482px;font-size:13px;color:#000">No</div>
<div class="t" style="left:203px;top:482px;font-size:13px;color:#000">No</div>
<div class="t" style="left:264px;top:482px;width:62px;text-align:right;font-size:13px;color:#000">24</div>
<div class="t" style="left:328px;top:482px;width:62px;text-align:right;font-size:13px;color:#000">8</div>
<div class="t" style="left:392px;top:482px;width:62px;text-align:right;font-size:13px;color:#000">0</div>
<div class="t" style="left:459px;top:482px;font-size:13px;color:#000;letter-spacing:0.07px">0037d889-ea38-4325-b1df-83429d7fe1b2</div>
<svg class="ab" style="left:25px;top:498px" width="6" height="6" viewBox="0 0 6 6"><path d="M0 0H6L0 6Z" fill="#1e7b3a"/></svg>
<div class="t" style="left:27px;top:502px;font-size:13px;color:#000">34</div>
<div class="t" style="left:117px;top:502px;font-size:13px;color:#000">No</div>
<div class="t" style="left:203px;top:502px;font-size:13px;color:#000">No</div>
<div class="t" style="left:264px;top:502px;width:62px;text-align:right;font-size:13px;color:#000">0</div>
<div class="t" style="left:328px;top:502px;width:62px;text-align:right;font-size:13px;color:#000">8</div>
<div class="t" style="left:392px;top:502px;width:62px;text-align:right;font-size:13px;color:#000">0</div>
<div class="t" style="left:459px;top:502px;font-size:13px;color:#000;letter-spacing:0.07px">37cb6cbf-52da-48fc-a8cb-b20d49cc431b</div>
<div class="ab" style="left:23px;top:157px;width:93px;height:22px;border:2px solid #217346;background:transparent"></div>
<div class="ab" style="left:112px;top:175px;width:6px;height:6px;background:#217346;border:1px solid #fff"></div>
<div class="ab" style="left:753px;top:78px;width:19px;height:437px;background:#e6e6e6"></div>
<div class="ab" style="left:756px;top:80px;width:15px;height:15px;background:#fff;border:1px solid #ababab"></div>
<svg class="ab" style="left:759px;top:84px" width="9" height="6" viewBox="0 0 9 6"><path d="M0.5 5.5L4.5 0.5L8.5 5.5Z" fill="#606060"/></svg>
<div class="ab" style="left:756px;top:95px;width:15px;height:404px;background:#fff;border:1px solid #ababab"></div>
<div class="ab" style="left:756px;top:499px;width:15px;height:16px;background:#fff;border:1px solid #ababab"></div>
<svg class="ab" style="left:759px;top:504px" width="9" height="6" viewBox="0 0 9 6"><path d="M0.5 0.5L4.5 5.5L8.5 0.5Z" fill="#606060"/></svg>
<div class="ab" style="left:0px;top:515px;width:772px;height:28px;background:#e6e6e6"></div>
<div class="ab" style="left:0px;top:515px;width:772px;height:1px;background:#ababab"></div>
<svg class="ab" style="left:23px;top:522px" width="8" height="12" viewBox="0 0 8 12"><path d="M6 1.5L1.5 6L6 10.5Z" fill="#c3c3c3"/></svg>
<svg class="ab" style="left:51px;top:522px" width="8" height="12" viewBox="0 0 8 12"><path d="M1.5 1.5L6 6L1.5 10.5Z" fill="#c3c3c3"/></svg>
<div class="ab" style="left:99px;top:515px;width:181px;height:25px;background:#fff;border-left:1px solid #ababab;border-right:1px solid #ababab"></div>
<div class="ab" style="left:99px;top:538px;width:181px;height:2px;background:#217346"></div>
<div class="t" style="left:99px;top:522px;width:181px;text-align:center;font-size:13px;font-weight:700;color:#1e6b40;letter-spacing:-0.05px">Point Object Connectivity</div>
<svg class="ab" style="left:312px;top:519px" width="19" height="19" viewBox="0 0 19 19"><circle cx="9.5" cy="9.5" r="8" fill="none" stroke="#7a7a7a" stroke-width="1.2"/><path d="M9.5 5V14M5 9.5H14" stroke="#7a7a7a" stroke-width="1.3"/></svg>
<div class="ab" style="left:464px;top:524px;width:2px;height:2px;background:#a6a6a6"></div>
<div class="ab" style="left:464px;top:529px;width:2px;height:2px;background:#a6a6a6"></div>
<div class="ab" style="left:464px;top:534px;width:2px;height:2px;background:#a6a6a6"></div>
<div class="ab" style="left:481px;top:522px;width:269px;height:15px;background:#dadada;border:1px solid #ababab"></div>
<div class="ab" style="left:482px;top:523px;width:14px;height:13px;background:#fff;border-right:1px solid #ababab"></div>
<svg class="ab" style="left:485px;top:525px" width="7" height="9" viewBox="0 0 7 9"><path d="M5.5 0.5L1 4.5L5.5 8.5Z" fill="#606060"/></svg>
<div class="ab" style="left:496px;top:523px;width:209px;height:13px;background:#fff;border-right:1px solid #ababab"></div>
<div class="ab" style="left:735px;top:523px;width:14px;height:13px;background:#fff;border-left:1px solid #ababab"></div>
<svg class="ab" style="left:739px;top:525px" width="7" height="9" viewBox="0 0 7 9"><path d="M1.5 0.5L6 4.5L1.5 8.5Z" fill="#606060"/></svg>
<div class="ab" style="left:0px;top:543px;width:772px;height:20px;background:#f3f2f1"></div>
<div class="t" style="left:6px;top:549px;font-size:11px;color:#444">Ready</div>
<div class="ab" style="left:477px;top:543px;width:38px;height:20px;background:#c8c8c8"></div>
<svg class="ab" style="left:489px;top:547px" width="13" height="13" viewBox="0 0 13 13"><path d="M0.5 0.5H12.5V12.5H0.5ZM4.5 0.5V12.5M8.5 0.5V12.5M0.5 4.5H12.5M0.5 8.5H12.5" fill="none" stroke="#555" stroke-width="1"/></svg>
<svg class="ab" style="left:527px;top:547px" width="14" height="13" viewBox="0 0 14 13"><rect x="0.5" y="0.5" width="13" height="12" fill="none" stroke="#555"/><rect x="3.5" y="3.5" width="7" height="7" fill="none" stroke="#555"/><path d="M5 5.5H9M5 7.5H9" stroke="#555"/></svg>
<svg class="ab" style="left:565px;top:547px" width="14" height="13" viewBox="0 0 14 13"><path d="M0.5 12.5V0.5H13.5V12.5M0.5 12.5H13.5M4.5 0.5V6.5H9.5V0.5" fill="none" stroke="#555"/></svg>
<div class="ab" style="left:596px;top:553px;width:6px;height:2px;background:#555"></div>
<div class="ab" style="left:606px;top:554px;width:100px;height:1px;background:#a0a0a0"></div>
<div class="ab" style="left:654px;top:548px;width:5px;height:11px;background:#6f6f6f"></div>
<div class="ab" style="left:709px;top:553px;width:8px;height:2px;background:#555"></div>
<div class="ab" style="left:712px;top:550px;width:2px;height:8px;background:#555"></div>
<div class="t" style="left:727px;top:549px;font-size:11px;color:#444;letter-spacing:-0.3px">100%</div>
</div>
</div></body></html>
